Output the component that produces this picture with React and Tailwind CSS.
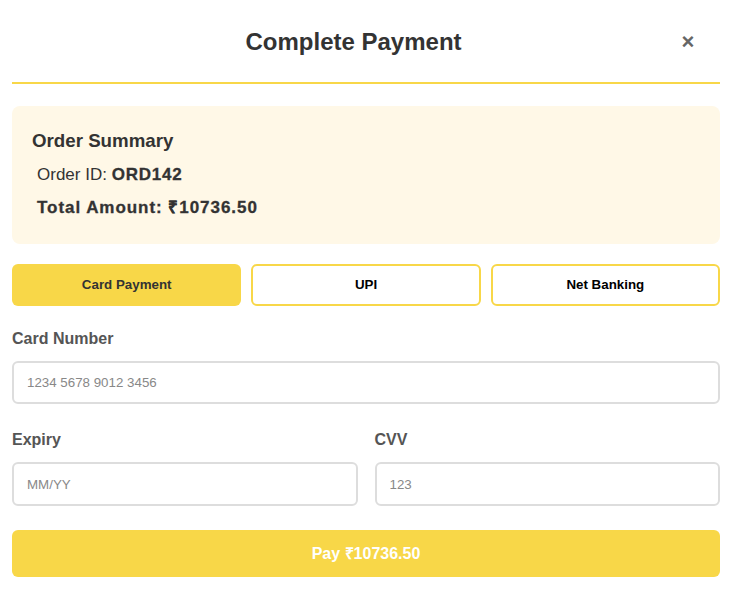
export default function App() {
  const tabs = ["Card Payment", "UPI", "Net Banking"];
  const active = 0;

  return (
    <div
      className="bg-white w-[743px] min-h-[592px] pl-3 pt-[20px] text-[#333]"
      style={{ fontFamily: '"Liberation Sans", Arial, sans-serif' }}
    >
      <div className="w-[708px]">
        {/* Header */}
        <div className="flex items-center h-[44px] pb-[18px] box-content border-b-2 border-[#f8d748]">
          <h2 className="flex-1 text-center text-[24px] font-bold text-[#333] pl-[20px]">
            Complete Payment
          </h2>
          <button className="w-[26px] h-[26px] mr-[19px] flex items-center justify-center text-[#666] text-[22px] font-bold leading-none">
            ×
          </button>
        </div>

        {/* Order summary */}
        <div className="mt-[22px] bg-[#fff8e7] rounded-lg px-5 pt-[21px] pb-[24px]">
          <h3 className="text-[18.72px] font-bold text-[#333] leading-[28px]">Order Summary</h3>
          <p className="ml-[5px] mt-[8px] text-[17px] text-[#333] leading-[24px]">
            Order ID:{" "}
            <strong className="font-bold tracking-[0.8px] [-webkit-text-stroke:0.3px_#333]">ORD142</strong>
          </p>
          <p className="ml-[5px] mt-[9px] text-[17px] font-bold text-[#333] leading-[24px] tracking-[0.95px] [-webkit-text-stroke:0.3px_#333]">
            Total Amount: ₹10736.50
          </p>
        </div>

        {/* Tabs */}
        <div className="grid grid-cols-3 gap-[10px] mt-[20px]">
          {tabs.map((t, i) => (
            <button
              key={t}
              className={
                i === active
                  ? "h-[42px] rounded-md bg-[#f8d748] text-[13.33px] font-bold text-[#333]"
                  : "h-[42px] rounded-md bg-white border-2 border-[#f8d748] text-[13.33px] font-bold text-black"
              }
            >
              {t}
            </button>
          ))}
        </div>

        {/* Card number */}
        <div className="mt-[22px]">
          <label className="block text-[16px] font-bold text-[#555] leading-[22px]">Card Number</label>
          <input
            className="mt-[11px] w-full h-[43px] border-2 border-[#ddd] rounded-md px-[13px] text-[13.33px] placeholder-[#888] outline-none"
            placeholder="1234 5678 9012 3456"
          />
        </div>

        <div className="grid grid-cols-2 gap-[17px] mt-[25px]">
          <div>
            <label className="block text-[16px] font-bold text-[#555] leading-[22px]">Expiry</label>
            <input
              className="mt-[11px] w-full h-[44px] border-2 border-[#ddd] rounded-md px-[13px] text-[13.33px] placeholder-[#888] outline-none"
              placeholder="MM/YY"
            />
          </div>
          <div>
            <label className="block text-[16px] font-bold text-[#555] leading-[22px]">CVV</label>
            <input
              className="mt-[11px] w-full h-[44px] border-2 border-[#ddd] rounded-md px-[13px] text-[13.33px] placeholder-[#888] outline-none"
              placeholder="123"
            />
          </div>
        </div>

        <button className="mt-[24px] w-full h-[47px] rounded-md bg-[#f8d748] text-white text-[16px] font-bold">
          Pay ₹10736.50
        </button>
      </div>
    </div>
  );
}
